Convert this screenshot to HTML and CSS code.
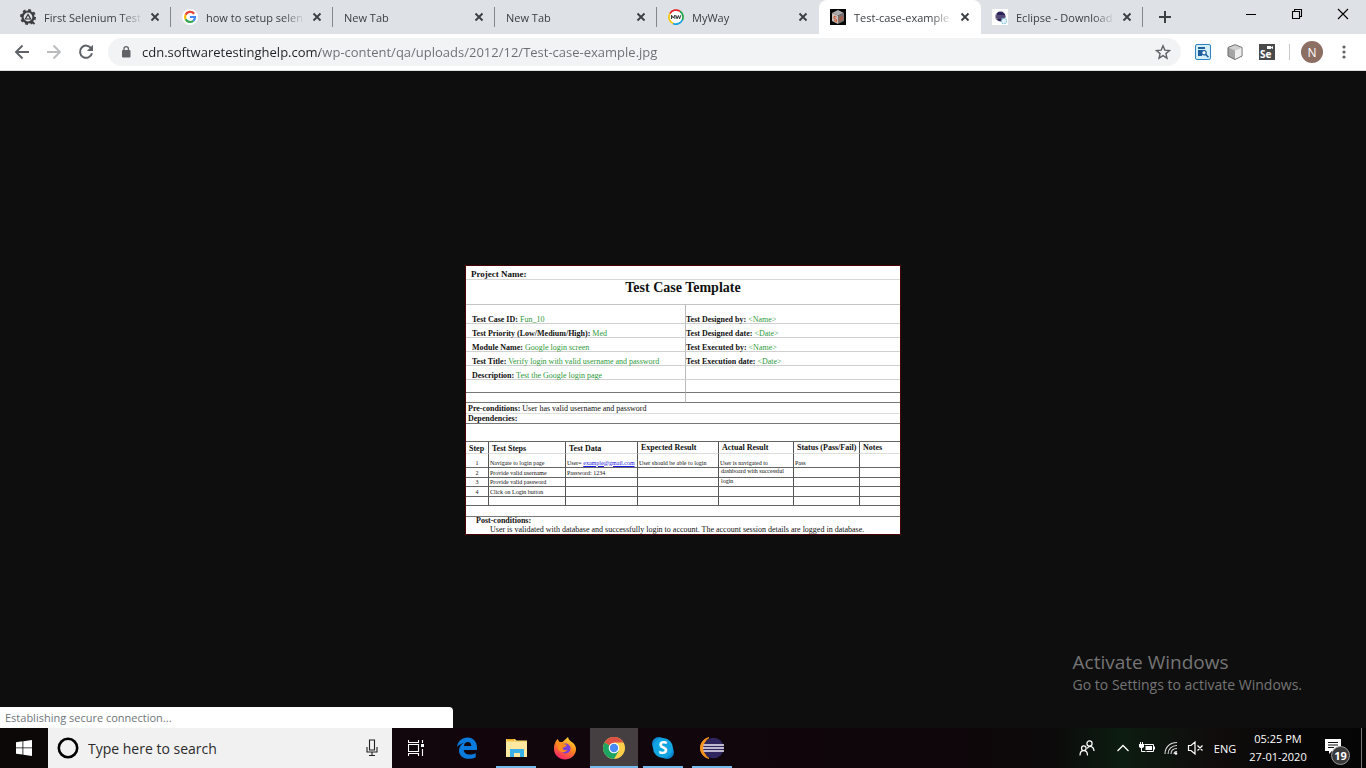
FILE: index.html
```html
<!DOCTYPE html>
<html lang="en">
<head>
<meta charset="utf-8">
<title>Test-case-example.jpg</title>
<link rel="stylesheet" href="styles.css">
</head>
<body>
<svg class="defs" aria-hidden="true">
  <symbol id="x" viewBox="0 0 16 16"><path d="M4.5 4.5l7 7M11.5 4.5l-7 7" stroke="#3c4043" stroke-width="1.9" fill="none"/></symbol>
</svg>

<header class="tabstrip">
  <div class="tab">
    <svg class="fav" viewBox="0 0 16 16"><circle cx="8" cy="8" r="5.5" fill="none" stroke="#3b3d40" stroke-width="2.2"/><circle cx="8" cy="8" r="7" fill="none" stroke="#3b3d40" stroke-width="2" stroke-dasharray="2.8 2.7"/><path d="M8 5.4L10.6 10H5.4z" fill="none" stroke="#3b3d40" stroke-width="1.2"/><path d="M11 11.5l3.500 3.500" stroke="#3b3d40" stroke-width="1.800"/></svg>
    <a class="title" href="#">First Selenium Test</a>
    <button class="close" aria-label="Close tab"><svg><use href="#x"/></svg></button>
  </div>
  <div class="tab">
    <svg class="fav" viewBox="0 0 16 16"><circle cx="8" cy="8" r="8" fill="#fff"/><g fill="none" stroke-width="2.2"><path d="M12.100 4.700A5 5 0 0 0 3.600 5.700" stroke="#ea4335"/><path d="M3.600 5.700A5 5 0 0 0 3.600 10.300" stroke="#fbbc05"/><path d="M3.600 10.300A5 5 0 0 0 11.300 11.800" stroke="#34a853"/><path d="M8 8H13A5 5 0 0 1 11.300 11.800" stroke="#4285f4"/></g></svg>
    <a class="title" href="#">how to setup selen</a>
    <button class="close" aria-label="Close tab"><svg><use href="#x"/></svg></button>
  </div>
  <div class="tab">
    <a class="title" href="#">New Tab</a>
    <button class="close" aria-label="Close tab"><svg><use href="#x"/></svg></button>
  </div>
  <div class="tab">
    <a class="title" href="#">New Tab</a>
    <button class="close" aria-label="Close tab"><svg><use href="#x"/></svg></button>
  </div>
  <div class="tab plain">
    <svg class="fav" viewBox="0 0 16 16"><circle cx="8" cy="8" r="7" fill="#fff"/><g fill="none" stroke-width="1.800"><path d="M2 4.500A7 7 0 0 1 12 2.300" stroke="#e4252d"/><path d="M12 2.300A7 7 0 0 1 14.300 11" stroke="#1ba345"/><path d="M14.300 11A7 7 0 0 1 5 14.500" stroke="#16a0e0"/><path d="M5 14.500A7 7 0 0 1 2 4.500" stroke="#f6c714"/></g><path d="M3.500 10V6.200L5.200 9L6.900 6.200V10M7.800 6.200L9.100 9.800L10.400 6.500L11.600 9.800L12.800 6.200" fill="none" stroke="#222" stroke-width=".9"/></svg>
    <a class="title" href="#">MyWay</a>
    <button class="close" aria-label="Close tab"><svg><use href="#x"/></svg></button>
  </div>
  <div class="tab active">
    <svg class="fav" viewBox="0 0 16 16"><path d="M0 0h16v16H0z" fill="#050505"/><path d="M2 4l6-3 6 3-6 2.500z" fill="#aaa"/><path d="M2 4l6 2.500V15l-6-3z" fill="#c9bdb8"/><path d="M14 4L8 6.500V15l6-3z" fill="#77706e"/><path d="M6.500 8L4 7.500v2l2.500 1v2L4 11.500M10 8v4M12 7v4" stroke="#d04a25" stroke-width=".9" fill="none"/></svg>
    <a class="title" href="#">Test-case-example</a>
    <button class="close" aria-label="Close tab"><svg><use href="#x"/></svg></button>
  </div>
  <div class="tab">
    <svg class="fav" viewBox="0 0 16 16"><path d="M0 0h16v16H0z" fill="#fff"/><circle cx="8.500" cy="7.500" r="5" fill="#2c2255"/><path d="M4.300 5A5 5 0 0 0 5 11" stroke="#a99bb0" fill="none"/><path d="M4 7h9M4 9h9" stroke="#8d87a8" stroke-width=".8"/><circle cx="12" cy="12" r="2.600" fill="#e8f4fb" stroke="#8fc6e6" stroke-width="1.300" stroke-dasharray="1.500 .8"/></svg>
    <a class="title" href="#">Eclipse - Download</a>
    <button class="close" aria-label="Close tab"><svg><use href="#x"/></svg></button>
  </div>
  <button class="newtab" aria-label="New tab"><svg viewBox="0 0 16 16"><path d="M8 2v12M2 8h12" stroke="#3c4043" stroke-width="2"/></svg></button>
  <div class="wincontrols">
    <button aria-label="Minimize"><svg viewBox="0 0 12 12"><path d="M1 6.500h10" stroke="#000"/></svg></button>
    <button aria-label="Restore"><svg viewBox="0 0 12 12"><path d="M1.500 3.500h7v7h-7zM3.500 3.500v-2h7v7h-2" fill="none" stroke="#000" stroke-width="1.100"/></svg></button>
    <button aria-label="Close"><svg viewBox="0 0 12 12"><path d="M1 1l10 10M11 1L1 11" stroke="#000" stroke-width="1.100"/></svg></button>
  </div>
</header>

<nav class="toolbar">
  <button class="tool" aria-label="Back"><svg viewBox="0 0 16 16"><path d="M15 8H2M8.500 1.500L2 8l6.500 6.500" fill="none" stroke="#5f6368" stroke-width="1.900"/></svg></button>
  <button class="tool" aria-label="Forward"><svg viewBox="0 0 16 16"><path d="M1 8h13M7.500 1.500L14 8l-6.500 6.500" fill="none" stroke="#babcbe" stroke-width="1.900"/></svg></button>
  <button class="tool" aria-label="Reload"><svg viewBox="0 0 16 16"><path d="M13.300 4.500A6.100 6.100 0 1 0 14 9.300" fill="none" stroke="#5f6368" stroke-width="2"/><path d="M15 .8V7H8.800z" fill="#5f6368"/></svg></button>
  <div class="omnibox">
    <svg class="lock" viewBox="0 0 12 14"><rect x="2" y="5" width="8.500" height="7.500" rx="1" fill="#5f6368"/><path d="M4 5.500V3.800a2.200 2.200 0 0 1 4.400 0v1.700" fill="none" stroke="#5f6368" stroke-width="1.300"/></svg>
    <input class="url" type="text" aria-label="Address" value="cdn.softwaretestinghelp.com/wp-content/qa/uploads/2012/12/Test-case-example.jpg">
    <button class="star" aria-label="Bookmark this page"><svg viewBox="0 0 16 16"><path d="M8 1.800l1.800 4.300 4.700.4-3.600 3.100 1.100 4.600-4-2.500-4 2.500 1.100-4.600L1.500 6.500l4.700-.4z" fill="none" stroke="#5f6368" stroke-width="1.400"/></svg></button>
  </div>
  <button class="ext" aria-label="Page search extension"><svg viewBox="0 0 16 16"><rect x=".5" y=".5" width="15" height="15" rx="1.500" fill="#d4eefa" stroke="#2f83c0"/><path d="M3 3h7v2H3zM3 6h4v6H3zM7 6h3v1H7z" fill="#1f5f9e"/><circle cx="9" cy="8.700" r="2.200" fill="#fff" stroke="#1f5f9e" stroke-width="1.200"/><path d="M10.500 10.300l3 3" stroke="#1f5f9e" stroke-width="1.600"/></svg></button>
  <button class="ext" aria-label="Cube extension"><svg viewBox="0 0 16 16"><path d="M8 .7l7 2.800v8.500l-7 3.500-7-3.500V3.500z" fill="#a5a5a5" stroke="#666"/><path d="M1.500 3.800L8 1.200l6.500 2.600L8 6.500z" fill="#d0d0d0"/><path d="M8 6.500l6.500-2.700v7.900L8 15z" fill="#eee"/></svg></button>
  <button class="ext" aria-label="Selenium IDE"><svg viewBox="0 0 16 16"><path d="M0 0h16v16H0z" fill="#48494b"/><path d="M8 2h4v3H8zM12 3.300L14 2v3l-2-1z" fill="#fff"/><text x="1" y="14" class="se">Se</text></svg></button>
  <span class="divider"></span>
  <button class="avatar" aria-label="Profile">N</button>
  <button class="menu" aria-label="Menu"><svg viewBox="0 0 16 16" fill="#5f6368"><circle cx="8" cy="3" r="1.600"/><circle cx="8" cy="8" r="1.600"/><circle cx="8" cy="13" r="1.600"/></svg></button>
</nav>

<main class="viewer">
  <article class="sheet">
    <p class="project">Project Name:</p>
    <h1>Test Case Template</h1>
    <table class="info">
      <tr class="first"><td><b>Test Case ID:</b> <i>Fun_10</i></td><td><b>Test Designed by:</b> <i>&lt;Name&gt;</i></td></tr>
      <tr><td><b>Test Priority (Low/Medium/High):</b> <i>Med</i></td><td><b>Test Designed date:</b> <i>&lt;Date&gt;</i></td></tr>
      <tr><td><b>Module Name:</b> <i>Google login screen</i></td><td><b>Test Executed by:</b> <i>&lt;Name&gt;</i></td></tr>
      <tr><td><b>Test Title:</b> <i>Verify login with valid username and password</i></td><td><b>Test Execution date:</b> <i>&lt;Date&gt;</i></td></tr>
      <tr><td><b>Description:</b> <i>Test the Google login page</i></td><td></td></tr>
      <tr class="dark"><td></td><td></td></tr>
      <tr class="dark last"><td></td><td></td></tr>
    </table>
    <p class="pre"><b>Pre-conditions:</b> User has valid username and password</p>
    <p class="dep"><b>Dependencies:</b></p>
    <table class="steps">
      <thead><tr><th class="c1 low">Step</th><th class="c2 low">Test Steps</th><th class="c3 low">Test Data</th><th class="c4">Expected Result</th><th class="c5">Actual Result</th><th class="c6">Status (Pass/Fail)</th><th class="c7">Notes</th></tr></thead>
      <tbody>
        <tr class="tall"><td>1</td><td>Navigate to login page</td><td>User= <a href="#">example@gmail.com</a></td><td>User should be able to login</td><td>User is navigated to</td><td>Pass</td><td></td></tr>
        <tr><td>2</td><td>Provide valid username</td><td>Password: 1234</td><td></td><td class="cont">dashboard with successful</td><td></td><td></td></tr>
        <tr><td>3</td><td>Provide valid password</td><td></td><td></td><td class="cont">login</td><td></td><td></td></tr>
        <tr><td>4</td><td>Click on Login button</td><td></td><td></td><td></td><td></td><td></td></tr>
        <tr><td></td><td></td><td></td><td></td><td></td><td></td><td></td></tr>
      </tbody>
    </table>
    <section class="post"><b>Post-conditions:</b><p>User is validated with database and successfully login to account. The account session details are logged in database.</p></section>
  </article>
  <aside class="watermark"><strong>Activate Windows</strong><span>Go to Settings to activate Windows.</span></aside>
  <div class="status">Establishing secure connection...</div>
</main>

<footer class="taskbar">
  <button class="start" aria-label="Start"><svg viewBox="0 0 16 16" fill="#fff"><path d="M0 2.200l6.500-.9v6.200H0zM7.300 1.200L16 0v7.500H7.300zM0 8.300h6.500v6.300L0 13.700zM7.300 8.300H16V16l-8.700-1.200z"/></svg></button>
  <label class="search">
    <svg class="ring" viewBox="0 0 24 24"><circle cx="12" cy="12" r="9.200" fill="none" stroke="#000" stroke-width="2.600"/></svg>
    <input type="text" placeholder="Type here to search" aria-label="Type here to search">
    <svg class="mic" viewBox="0 0 12 18"><path d="M3.500 1h5v10h-5zM1 8v5h10V8M6 13v3.500M3 16.500h6" fill="none" stroke="#222" stroke-width="1.100"/></svg>
  </label>
  <button class="app view" aria-label="Task view"><svg viewBox="0 0 16 16"><path d="M.5 0v2.500h10V0M.5 16v-2.500h10V16M.5 4.500h10v7H.5zM14.500 0v3M14.500 9v7" fill="none" stroke="#fff" stroke-width="1.100"/><path d="M13 4h3v3h-3z" fill="#fff"/></svg></button>
  <div class="apps">
    <button class="app" aria-label="Edge"><svg viewBox="0 0 24 24"><path d="M2 11C3 5 7 1.500 12.500 1.500 18.500 1.500 22 6 22 11.500V14H8.700c.3 3.200 3 4.600 6 4.600 2.200 0 4.300-.7 6-1.700v4.400c-2 1-4.300 1.500-6.800 1.500C7.800 22.800 4 19.300 4 14.500c0-3.300 1.900-6 5-7.500C6.300 7.500 3.700 9 2 11zm7-1h7.300c0-2.600-1.300-4-3.500-4S9.300 7.500 9 10z" fill="#0a7bdc"/></svg></button>
    <button class="app open" aria-label="File Explorer"><svg viewBox="0 0 24 24"><path d="M2 3h9l1.500 1.500H23V21H2z" fill="#fbd772"/><path d="M2 6h21v15H2z" fill="#ffe9a2"/><path d="M3 3h7v1.500H3z" fill="#e8a820"/><path d="M6 21v-8h14v8h-4v-4h-6v4z" fill="#39b0e8"/></svg></button>
    <button class="app" aria-label="Firefox"><svg viewBox="0 0 24 24"><defs><linearGradient id="ff" x1=".8" y1="0" x2=".3" y2="1"><stop offset="0" stop-color="#ffe23d"/><stop offset=".45" stop-color="#ff8a1d"/><stop offset="1" stop-color="#f5206c"/></linearGradient></defs><path d="M3 5l1.500-2 2 3h3L15 1c.5 3 2.500 4 4.500 5.500C22 8.500 23.300 11 23 14c-.6 5.500-5.300 9.500-11 9.500S1 19 1 13c0-3 .5-5.500 2-8z" fill="url(#ff)"/><circle cx="12.500" cy="12.500" r="5" fill="#7a3fd8"/><path d="M4 8c3-2 5-1 7 0l3 1c-1 2-3 2-4.500 3 0 2 2.500 2.500 5 2-2 3-8 3-9.500-1z" fill="#ff8a1d"/></svg></button>
    <button class="app open current" aria-label="Chrome"><svg viewBox="0 0 24 24"><circle cx="12" cy="12" r="11" fill="#fcd04b"/><path d="M12 12L2.500 6.500A11 11 0 0 1 21.500 6.500H12z" fill="#dd5144"/><path d="M12 12l-9.500-5.500A11 11 0 0 0 12 23l4.800-8.300z" fill="#1da462"/><circle cx="12" cy="12" r="5.300" fill="#fff"/><circle cx="12" cy="12" r="4.200" fill="#4a8af4"/></svg></button>
    <button class="app open" aria-label="Skype"><svg viewBox="0 0 24 24"><circle cx="8" cy="8" r="7" fill="#0f8ed8"/><circle cx="16" cy="16" r="7" fill="#0a85d0"/><circle cx="12" cy="12" r="10" fill="#12a5e2"/><text class="skype" x="12" y="18" text-anchor="middle">S</text></svg></button>
    <button class="app open" aria-label="Eclipse"><svg viewBox="0 0 24 24"><path d="M9 1.500A10.700 10.700 0 0 0 9 22.500 13 13 0 0 1 9 1.500z" fill="#f7941e" stroke="#f7941e"/><circle cx="13.500" cy="12" r="10.300" fill="#30265f"/><path d="M3.500 9h20.500M3 12h21M3.500 15h20.500" stroke="#eeeaf5" stroke-width="1.600"/></svg></button>
  </div>
  <div class="tray">
    <button class="people" aria-label="People"><svg class="i16" viewBox="0 0 16 16"><g fill="none" stroke="#fff" stroke-width="1.200"><circle cx="10.500" cy="3.500" r="2.600"/><circle cx="4.800" cy="8.200" r="2.300"/><path d="M1 15.500c0-6.500 7.500-6.500 7.500 0M8 8.500c3-4 7-1.500 7 2.500"/></g></svg></button>
    <button aria-label="Show hidden icons"><svg class="i16" viewBox="0 0 16 16"><path d="M2.500 11L8 5.500l5.500 5.500" fill="none" stroke="#fff" stroke-width="1.300"/></svg></button>
    <button aria-label="Battery"><svg class="i16" viewBox="0 0 16 16"><path d="M5.500 4.500h9v7h-7" fill="none" stroke="#fff"/><path d="M6.500 6h6.500v4H6.500zM15 6.500h1v3h-1zM0 4h5v3L3.500 8h-2L0 7z" fill="#fff"/><path d="M1.500 4V2M3.500 4V2M2.500 8v3.500h4" stroke="#fff" fill="none"/></svg></button>
    <button aria-label="Network"><svg class="i16" viewBox="0 0 16 16"><g fill="none" stroke="#ddd" stroke-width="1.100"><path d="M2 14C2 7 7 2.500 14 2.500M5 14c0-5 4-8.500 9-8.500M8 14c0-3.500 2.500-5.500 6-5.500M11 14c0-1.500 1-2.500 3-2.500"/></g><circle cx="13" cy="13.500" r="1.300" fill="#fff"/></svg></button>
    <button aria-label="Volume muted"><svg class="i16" viewBox="0 0 16 16"><path d="M1.500 5.500h2.500l4-3.500v12l-4-3.500H1.500zM10.500 5.500l5 5M15.500 5.500l-5 5" fill="none" stroke="#fff" stroke-width="1.200"/></svg></button>
    <button class="lang">ENG</button>
    <button class="clock"><time>05:25 PM</time><time>27-01-2020</time></button>
    <button class="notify" aria-label="19 notifications"><svg viewBox="0 0 26 26"><path d="M1 1h16v12H8l-3 3v-3H1z" fill="#fff"/><path d="M4 4.500h10M4 7h10M4 9.500h6" stroke="#111"/></svg><span class="badge">19</span></button>
    <button class="desktop" aria-label="Show desktop"></button>
  </div>
</footer>
</body>
</html>
```

FILE: styles.css
```css
* { box-sizing: border-box; }

body {
  margin: 0;
  height: 100vh;
  display: flex;
  flex-direction: column;
  overflow: hidden;
  background: #0e0e0e;
  font-family: "Open Sans", "Noto Sans", sans-serif;
  font-size: 11px;
}

button {
  display: flex;
  align-items: center;
  justify-content: center;
  flex: none;
  margin: 0;
  padding: 0;
  border: 0;
  background: none;
  color: inherit;
  font: inherit;
}

input { min-width: 0; border: 0; outline: 0; padding: 0; background: none; font: inherit; }
svg { display: block; flex: none; }
p, h1 { margin: 0; }
.defs { display: none; }

/* Tab strip */
.tabstrip {
  display: flex;
  flex: none;
  height: 34px;
  padding-left: 9px;
  background: #dee1e6;
}

.tab {
  position: relative;
  display: flex;
  align-items: center;
  flex: 0 1 162px;
  min-width: 0;
  padding: 0 8px 0 11px;
}

.tab::after {
  content: "";
  position: absolute;
  top: 7px;
  right: 0;
  width: 1px;
  height: 20px;
  background: #83868b;
}

.tab.plain::after, .tab.active::after { display: none; }
.tab.active { border-radius: 8px 8px 0 0; background: #fff; }
.fav { width: 16px; height: 16px; margin-right: 8px; }

.title {
  flex: 1;
  min-width: 0;
  margin-right: 4px;
  overflow: hidden;
  white-space: nowrap;
  color: #3c4043;
  text-decoration: none;
  mask-image: linear-gradient(to right, #000 calc(100% - 22px), transparent);
}

.close, .close svg { width: 16px; height: 16px; }
.newtab { width: 44px; }
.newtab svg { width: 16px; height: 16px; }
.wincontrols { display: flex; height: 28px; margin-left: auto; }
.wincontrols button { width: 46px; }
.wincontrols svg { width: 12px; height: 12px; }

/* Toolbar */
.toolbar {
  display: flex;
  align-items: center;
  flex: none;
  height: 37px;
  padding: 0 6px;
  border-bottom: 1px solid #dcdfdd;
  background: #fff;
}

.tool { width: 32px; }
.tool svg { width: 16px; height: 16px; }

.omnibox {
  display: flex;
  align-items: center;
  flex: 1;
  height: 28px;
  margin: 0 6px;
  padding: 0 10px 0 12px;
  border-radius: 14px;
  background: #f1f3f4;
}

.lock { width: 12px; height: 14px; margin-right: 10px; }

.url {
  flex: 1;
  font-size: 13px;
  color: transparent;
  caret-color: #202124;
  background: linear-gradient(to right, #202124 178px, #6a6e73 178px);
  background-clip: text;
}

.star svg, .ext svg, .menu svg { width: 16px; height: 16px; }
.ext { width: 32px; }
.se { font: bold 10px "Open Sans", sans-serif; fill: #fff; }
.divider { width: 1px; height: 16px; margin: 0 11px 0 6px; background: #c9cccf; }
.avatar { width: 22px; height: 22px; border-radius: 50%; background: #8d6e63; color: #fff; font-size: 12px; }
.menu { width: 32px; margin-left: 5px; }

/* Viewer */
.viewer {
  position: relative;
  display: flex;
  flex: 1;
  align-items: center;
  justify-content: center;
  min-height: 0;
  background: #0e0e0e;
}

.sheet {
  width: 436px;
  border: 1px solid #4a0004;
  background: #fff;
  color: #111;
  font: 8px/10px "Liberation Serif", serif;
  white-space: nowrap;
}

.project { height: 14px; padding-left: 5px; border-bottom: 1px solid #d8d8d8; font-size: 9px; line-height: 16px; font-weight: bold; }
.sheet h1 { height: 25px; border-bottom: 1px solid #c4c4c4; font-size: 14px; line-height: 16px; text-align: center; }

.sheet table { width: 100%; border-spacing: 0; table-layout: fixed; }
.sheet td, .sheet th { padding: 0; border: 0 solid #555; }
.info td { height: 14px; border-bottom: 1px solid #d0d0d0; vertical-align: bottom; line-height: 7px; }
.info td:first-child { width: 220px; padding-left: 6px; border-right: 1px solid #bbb; }
.info .first td { height: 19px; }
.info .dark td { height: 13px; border-bottom-color: #777; }
.info .last td { height: 10px; }
.info i { color: #2f9a3a; font-style: normal; }

.pre { height: 11px; padding-left: 2px; border-bottom: 1px solid #ddd; line-height: 12px; }
.dep { height: 10px; padding-left: 2px; border-bottom: 1px solid #777; }

.steps { margin-top: 17px; border-top: 1px solid #666; }
.steps th { height: 12px; padding-left: 3px; border-bottom: 1px solid #ddd; border-right: 1px solid #555; line-height: 11px; text-align: left; vertical-align: top; }
.steps .low { padding-top: 3px; line-height: 8px; }
.steps .c1 { width: 23px; padding-left: 3px; }
.c2 { width: 77px; }
.c3 { width: 72px; }
.c4 { width: 81px; }
.c5 { width: 75px; }
.c6 { width: 66px; }
.steps td { height: 9px; padding-left: 1px; border-bottom: 1px solid #666; border-right: 1px solid #555; font-size: 6px; line-height: 7px; vertical-align: bottom; }
.steps tr:nth-child(even) td { height: 10px; }
.steps td:first-child { padding-left: 0; text-align: center; }
.steps .tall td { height: 14px; }
.steps th:last-child, .steps td:last-child { border-right: 0; }
.steps .cont { padding-left: 2px; vertical-align: top; }
.steps a { color: #1a1ae0; }

.post { margin-top: 10px; padding-left: 10px; border-top: 1px solid #777; line-height: 9px; }
.post b { display: block; line-height: 8px; }
.post p { padding-left: 14px; }

.watermark {
  position: absolute;
  right: 64px;
  bottom: 33px;
  display: flex;
  flex-direction: column;
  color: #757575;
  font-size: 14px;
  line-height: 20px;
}

.watermark strong { font-size: 19px; font-weight: 400; line-height: 26px; }

.status {
  position: absolute;
  left: 0;
  bottom: 0;
  width: 453px;
  height: 21px;
  padding-left: 5px;
  border-radius: 0 4px 0 0;
  background: #fff;
  color: #70757a;
  line-height: 21px;
}

/* Taskbar */
.taskbar {
  display: flex;
  flex: none;
  height: 40px;
  background: linear-gradient(to right, #0c0807, #12060c 35%, #0e060a 70%, #0c0a0a 77%, #0c1c10 82%, #100c0c 89%, #060606 95%, #050505);
  color: #fff;
}

.start { width: 48px; }
.start svg, .i16 { width: 16px; height: 16px; }

.search {
  display: flex;
  align-items: center;
  width: 344px;
  padding: 0 14px 0 8px;
  background: #f1f1f1;
}

.search input { flex: 1; margin-left: 8px; color: #222; font-size: 14px; }
.search input::placeholder { color: #2b2b2b; opacity: 1; }
.ring { width: 24px; height: 24px; }
.mic { width: 12px; height: 18px; }

.apps { display: flex; gap: 1px; margin-left: 3px; }
.app { width: 48px; height: 40px; }
.app svg { width: 24px; height: 24px; }
.app.view svg { width: 16px; height: 16px; }
.open { background: linear-gradient(#76b9ed, #76b9ed) center bottom / 40px 2px no-repeat; }
.current { background-color: #453f41; background-size: 48px 2px; }
.skype { font: bold 17px "Open Sans", sans-serif; fill: #fff; }

.tray { display: flex; margin-left: auto; }
.tray button { width: 24px; }
.tray .people { width: 48px; }
.tray .lang { width: 36px; }
.tray .clock { flex-direction: column; width: 70px; line-height: 18px; }
.tray .notify { position: relative; width: 48px; padding-top: 6px; }
.notify svg { width: 26px; height: 26px; }
.badge {
  position: absolute;
  right: 11px;
  bottom: 3px;
  width: 19px;
  height: 19px;
  border: 1px solid #999;
  border-radius: 50%;
  background: #3a3a3a;
  font-size: 11px;
  font-weight: bold;
  line-height: 17px;
}
.tray .desktop { width: 5px; border-left: 1px solid #777; }
```
